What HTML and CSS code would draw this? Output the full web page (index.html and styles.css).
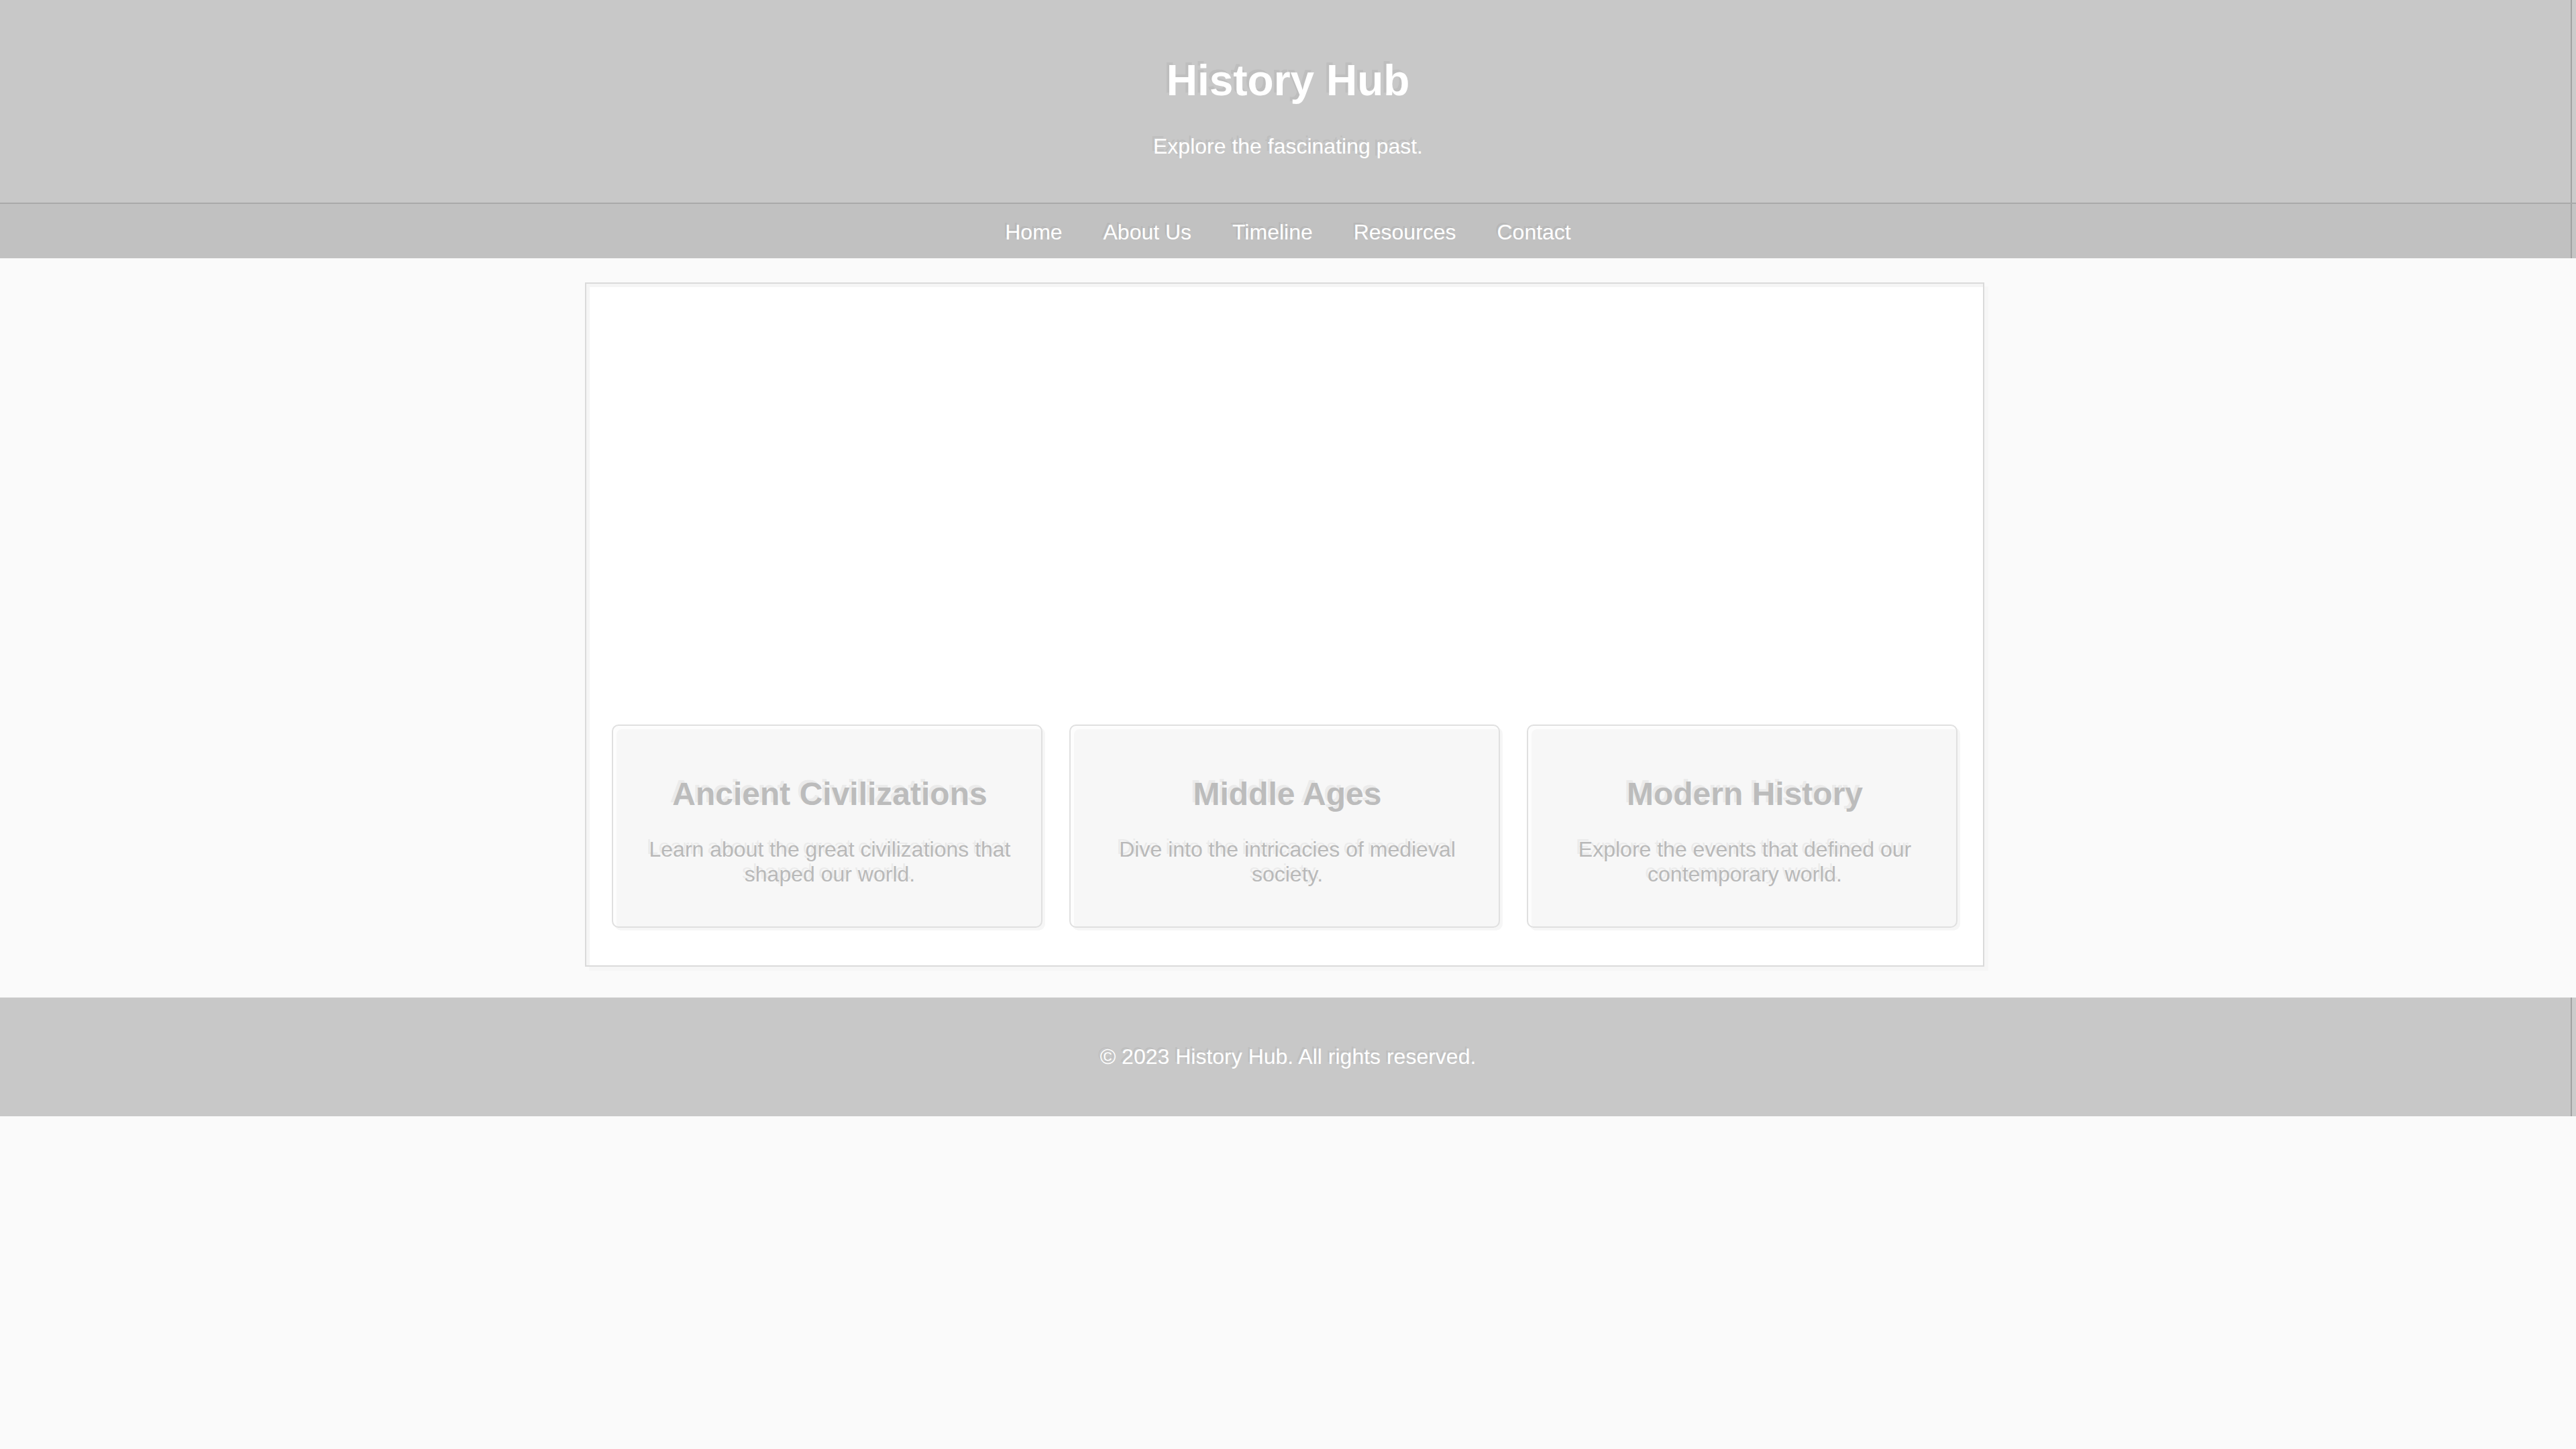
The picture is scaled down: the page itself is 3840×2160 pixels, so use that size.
FILE: index.html
```html
<!DOCTYPE html>
<html lang="en">
<head>
<meta charset="utf-8">
<title>History Hub</title>
<link rel="stylesheet" href="styles.css">
</head>
<body>
<header class="site-header">
  <h1 class="site-title">History Hub</h1>
  <p class="site-tagline">Explore the fascinating past.</p>
</header>
<nav class="site-nav">
  <a href="#" class="nav-link">Home</a>
  <a href="#" class="nav-link">About Us</a>
  <a href="#" class="nav-link">Timeline</a>
  <a href="#" class="nav-link">Resources</a>
  <a href="#" class="nav-link">Contact</a>
</nav>
<main class="container">
  <div class="hero"></div>
  <section class="cards">
    <article class="card">
      <h2 class="card-title">Ancient Civilizations</h2>
      <p class="card-text">Learn about the great civilizations that shaped our world.</p>
    </article>
    <article class="card">
      <h2 class="card-title">Middle Ages</h2>
      <p class="card-text">Dive into the intricacies of medieval society.</p>
    </article>
    <article class="card">
      <h2 class="card-title">Modern History</h2>
      <p class="card-text">Explore the events that defined our contemporary world.</p>
    </article>
  </section>
</main>
<footer class="site-footer">
  <p class="footer-text">&copy; 2023 History Hub. All rights reserved.</p>
</footer>
</body>
</html>
```

FILE: styles.css
```css
html, body {
  margin: 0;
  padding: 0;
}
body {
  background: #fafafa;
  font-family: "Liberation Sans", Arial, sans-serif;
  font-size: 32px;
  color: #b8b8b8;
}
.site-header {
  background: #c8c8c8;
  color: #fff;
  text-align: center;
  padding: 40px 0;
  border-bottom: 2px solid #a9a9a9;
  box-shadow: inset -6px 0 0 #cbcbcb, inset -8px 0 0 #a2a2a2;
}
.site-title {
  margin: 43px 0 0;
  font-size: 64px;
  font-weight: bold;
  line-height: 74px;
  text-shadow: -4px -4px 0 rgba(120,120,120,0.12);
}
.site-tagline {
  margin: 43px 0 25px;
  font-size: 32px;
  line-height: 37px;
  text-shadow: -4px -4px 0 rgba(120,120,120,0.12);
}
.site-nav {
  background: #c1c1c1;
  text-align: center;
  padding: 24px 0 20px;
  box-shadow: inset -6px 0 0 #c4c4c4, inset -8px 0 0 #a2a2a2;
}
.nav-link {
  color: #fff;
  text-decoration: none;
  margin: 0 26px;
  line-height: 37px;
  text-shadow: -3px -3px 0 rgba(120,120,120,0.12);
}
.container {
  width: 2086px;
  box-sizing: border-box;
  margin: 36px 0 46px calc(50% - 1048px);
  background: #fff;
  border: 2px solid #dadada;
  padding: 40px 38px 56px;
  box-shadow: inset 5px 5px 0 #f5f5f5, 6px 6px 0 #f6f6f6;
}
.hero {
  height: 617px;
}
.cards {
  display: flex;
  gap: 40px;
}
.card {
  flex: 1;
  background: #f7f7f7;
  border: 2px solid #e0e0e0;
  border-radius: 10px;
  padding: 38px 36px 40px 44px;
  text-align: center;
  box-shadow: inset 5px 5px 0 #fdfdfd, 4px 4px 0 #f6f6f6;
}
.card-title {
  margin: 36px 0 37px;
  font-size: 48px;
  line-height: 55px;
  font-weight: bold;
  color: #bcbcbc;
  text-shadow: -4px -4px 0 rgba(120,120,120,0.10);
}
.card-text {
  margin: 0 0 19px;
  font-size: 32px;
  line-height: 37px;
  color: #b9b9b9;
  text-shadow: -4px -4px 0 rgba(120,120,120,0.10);
}
.site-footer {
  background: #c8c8c8;
  color: #fff;
  text-align: center;
  padding: 70px 0;
  box-shadow: inset -6px 0 0 #cbcbcb, inset -8px 0 0 #a2a2a2;
}
.footer-text {
  margin: 0;
  line-height: 37px;
  text-shadow: -3px -3px 0 rgba(120,120,120,0.12);
}
```
